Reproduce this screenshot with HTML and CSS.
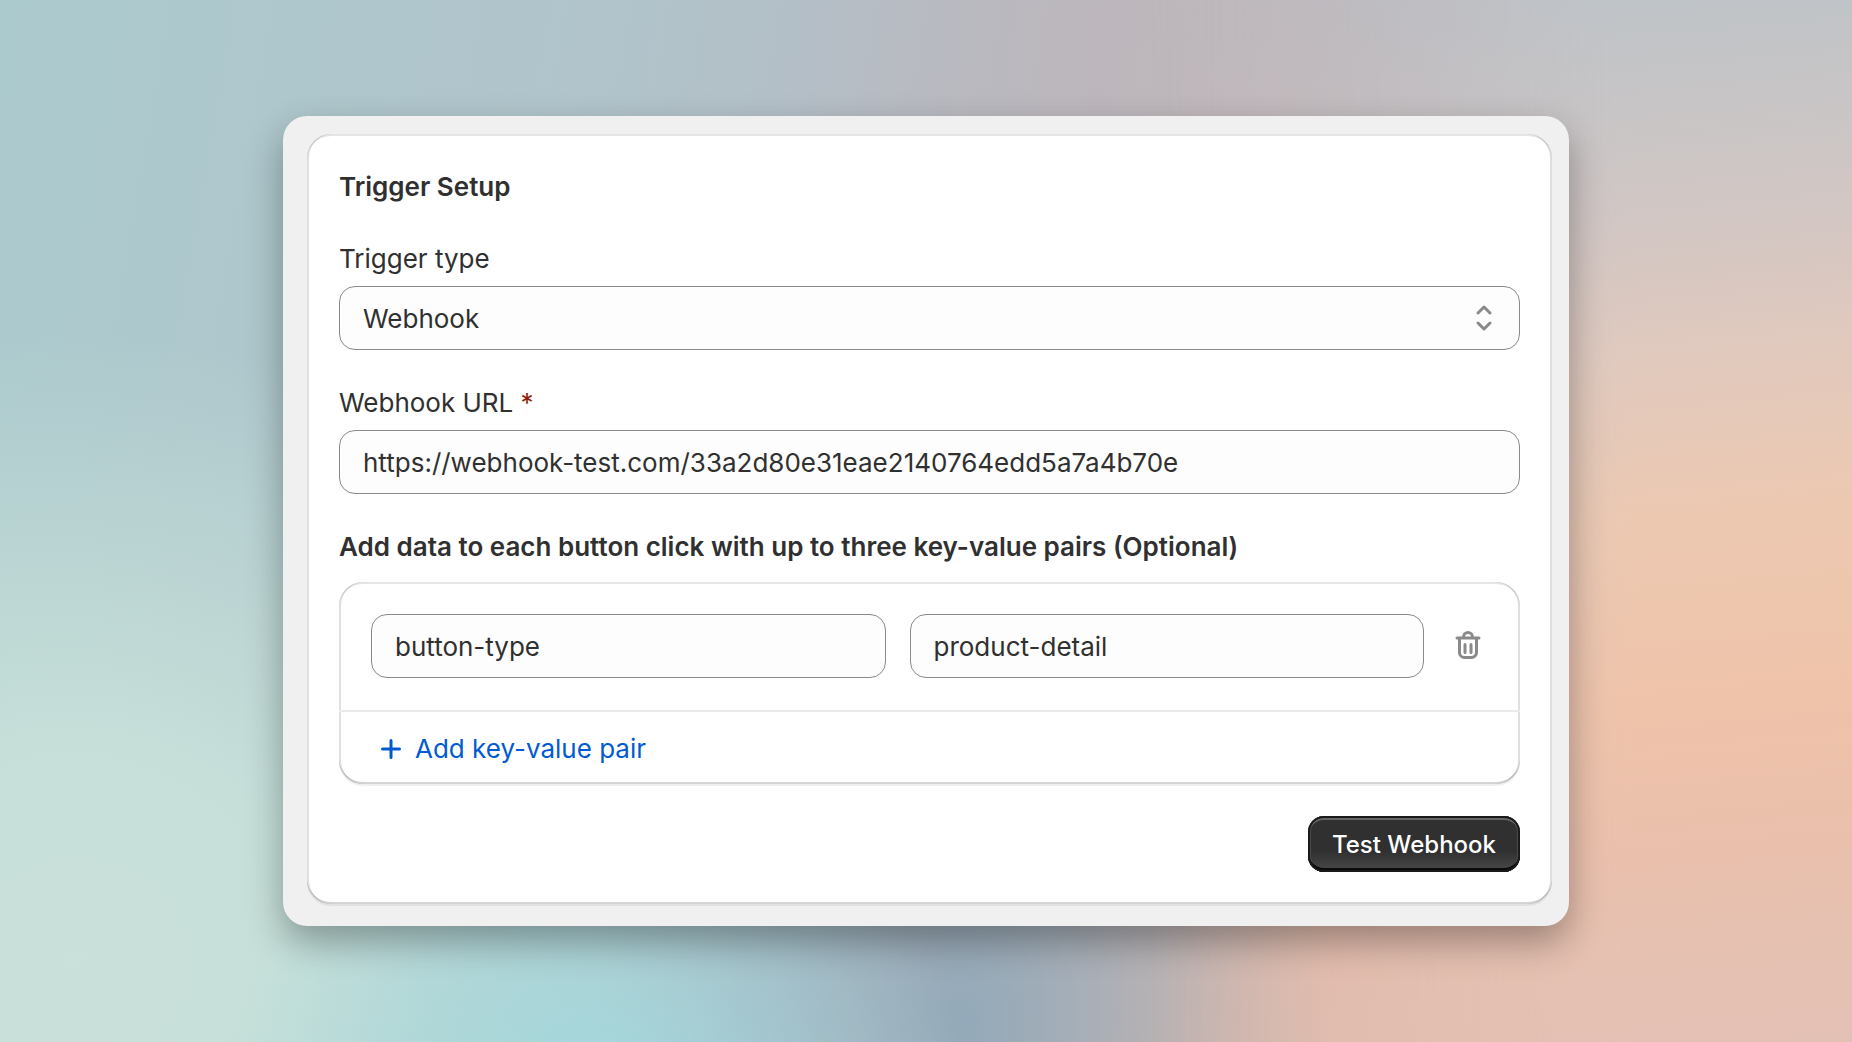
FILE: index.html
```html
<!DOCTYPE html>
<html lang="en">
<head>
    <meta charset="UTF-8">
    <meta name="viewport" content="width=device-width, initial-scale=1.0">
    <title>Trigger Setup</title>
    <link rel="stylesheet" href="styles.css">
</head>
<body>
    <main class="panel">
        <form class="card">
            <h1 class="heading">Trigger Setup</h1>

            <div class="field">
                <label for="trigger-type">Trigger type</label>
                <div class="select-wrapper">
                    <select id="trigger-type" class="input">
                        <option selected>Webhook</option>
                    </select>
                    <svg class="select-icon" viewBox="0 0 20 28" aria-hidden="true">
                        <path d="M4 9l6-6 6 6M4 19l6 6 6-6" />
                    </svg>
                </div>
            </div>

            <div class="field">
                <label for="webhook-url">Webhook URL <span class="required">*</span></label>
                <input id="webhook-url" class="input" type="text" value="https://webhook-test.com/33a2d80e31eae2140764edd5a7a4b70e" required>
            </div>

            <h2 class="heading">Add data to each button click with up to three key-value pairs (Optional)</h2>

            <div class="pairs">
                <div class="pair-row">
                    <input class="input" type="text" value="button-type" aria-label="Key">
                    <input class="input" type="text" value="product-detail" aria-label="Value">
                    <button type="button" class="delete-button" aria-label="Delete pair">
                        <svg viewBox="0 0 40 40" aria-hidden="true">
                            <path d="M9 12h22M15.5 11.5v-.5a4.5 4.5 0 0 1 9 0v.5M11.5 12.5v14a5 5 0 0 0 5 5h7a5 5 0 0 0 5-5v-14M17 18.5v8M23 18.5v8" />
                        </svg>
                    </button>
                </div>
                <div class="pair-footer">
                    <button type="button" class="add-button">
                        <svg viewBox="0 0 20 20" aria-hidden="true">
                            <path d="M10 1.5v17M1.5 10h17" />
                        </svg>
                        Add key-value pair
                    </button>
                </div>
            </div>

            <div class="actions">
                <button type="button" class="test-button">Test Webhook</button>
            </div>
        </form>
    </main>
</body>
</html>
```
FILE: styles.css
```css
/* General Styles */
* {
    box-sizing: border-box;
}

body {
    margin: 0;
    min-height: 100vh;
    display: flex;
    align-items: center;
    justify-content: center;
    position: relative;
    isolation: isolate;
    font-family: Inter, "Liberation Sans", sans-serif;
    font-size: 26px;
    line-height: 42px;
    color: #303030;
    background:
        radial-gradient(ellipse 20% 30% at 32% 104%, #a2d8dc 0%, rgba(162, 216, 220, 0) 100%),
        radial-gradient(ellipse 20% 50% at 52% 98%, #93a9b9 0%, rgba(147, 169, 185, 0) 100%),
        radial-gradient(ellipse 36% 60% at 4% 92%, #cae0da 0%, #c6dfd9 35%, rgba(198, 223, 217, 0) 100%),
        radial-gradient(ellipse 48% 50% at 90% 104%, #e2bfb3 0%, #deb9ab 50%, rgba(222, 185, 171, 0) 100%),
        radial-gradient(ellipse 28% 50% at 70% 8%, #c0b5b9 0%, rgba(192, 181, 185, 0) 100%),
        linear-gradient(100deg, #abcacd 0%, #b1c4cb 30%, #b6b9c2 52%, #bcbbc1 72%, #bac6ca 100%);
}

/* Warm side of the backdrop, fading out to the left */
body::before {
    content: "";
    position: absolute;
    inset: 0;
    z-index: -1;
    background: linear-gradient(175deg, #bbc5c9 0%, #bfc4c8 12%, #d0c6c4 29%, #e0c9be 41%, #ecc8b1 55%, #efc3aa 71%, #ebc0ac 82%, #e5c1b2 92%, #e3c0b4 100%);
    -webkit-mask-image: linear-gradient(to right, transparent 62%, #000 88%);
    mask-image: linear-gradient(to right, transparent 62%, #000 88%);
}

/* Panel */
.panel {
    width: 100%;
    max-width: 1286px;
    padding: 18px 17px 22px 24px;
    border-radius: 24px;
    background: #f0f0f0;
    box-shadow: 0 16px 36px rgba(0, 0, 0, 0.32);
}

.card {
    padding: 32px;
    border-radius: 24px;
    background: #fff;
    box-shadow:
        inset 2px 0 0 rgba(0, 0, 0, 0.12),
        inset -2px 0 0 rgba(0, 0, 0, 0.12),
        inset 0 -2px 0 rgba(0, 0, 0, 0.17),
        inset 0 2px 0 rgba(204, 204, 204, 0.5),
        0 2px 0 rgba(26, 26, 26, 0.07);
}

.heading {
    margin: 0 0 30px;
    font-size: 26px;
    font-weight: 600;
    line-height: 42px;
}

/* Fields */
.field {
    display: flex;
    flex-direction: column;
    gap: 6px;
    margin-bottom: 32px;
}

.required {
    color: #8e1f0b;
}

.input {
    width: 100%;
    min-width: 0;
    height: 64px;
    padding: 0 23px;
    border: 1px solid #8a8a8a;
    border-radius: 16px;
    background: #fdfdfd;
    color: #303030;
    font: inherit;
    appearance: none;
}

.select-wrapper {
    display: grid;
    align-items: center;
}

.select-wrapper .input,
.select-icon {
    grid-area: 1 / 1;
}

.select-wrapper .input {
    padding-top: 2px;
}

.select-icon {
    width: 20px;
    height: 28px;
    margin-right: 26px;
    justify-self: end;
    pointer-events: none;
}

svg {
    fill: none;
    stroke: #8a8a8a;
    stroke-width: 3;
    stroke-linecap: round;
    stroke-linejoin: round;
}

/* Key-value pairs */
h2.heading {
    margin-bottom: 14px;
}

.pairs {
    border-radius: 24px;
    box-shadow:
        inset 2px 0 0 rgba(0, 0, 0, 0.12),
        inset -2px 0 0 rgba(0, 0, 0, 0.12),
        inset 0 -2px 0 rgba(0, 0, 0, 0.17),
        inset 0 2px 0 rgba(204, 204, 204, 0.5),
        0 2px 0 rgba(26, 26, 26, 0.07);
}

.pair-row {
    display: flex;
    gap: 24px;
    align-items: center;
    padding: 32px;
}

.pair-row .input {
    flex: 1;
}

.pair-footer {
    padding: 16px 40px 14px;
    border-top: 2px solid #ebebeb;
}

button {
    border: none;
    background: none;
    font: inherit;
    cursor: pointer;
}

.delete-button {
    flex-shrink: 0;
    width: 40px;
    height: 40px;
    padding: 0;
}

.delete-button svg {
    display: block;
}

.add-button {
    display: flex;
    align-items: center;
    gap: 14px;
    padding: 0 2px;
    color: #005bd3;
}

.add-button svg {
    width: 20px;
    height: 20px;
    stroke: #005bd3;
}

/* Actions */
.actions {
    display: flex;
    justify-content: flex-end;
    margin-top: 32px;
}

.test-button {
    height: 56px;
    padding: 2px 24px 0;
    border-radius: 16px;
    background: linear-gradient(to bottom, #303030 63%, #4a4a4a 100%);
    box-shadow:
        inset 0 0 0 2px #1a1a1a,
        inset 0 -4px 0 #0a0a0a,
        inset 0 4px 0 #666,
        inset 2px 0 0 1px #4a4a4a,
        inset -2px 0 0 1px #4a4a4a;
    color: #fff;
    font-size: 24px;
    font-weight: 500;
}
```
